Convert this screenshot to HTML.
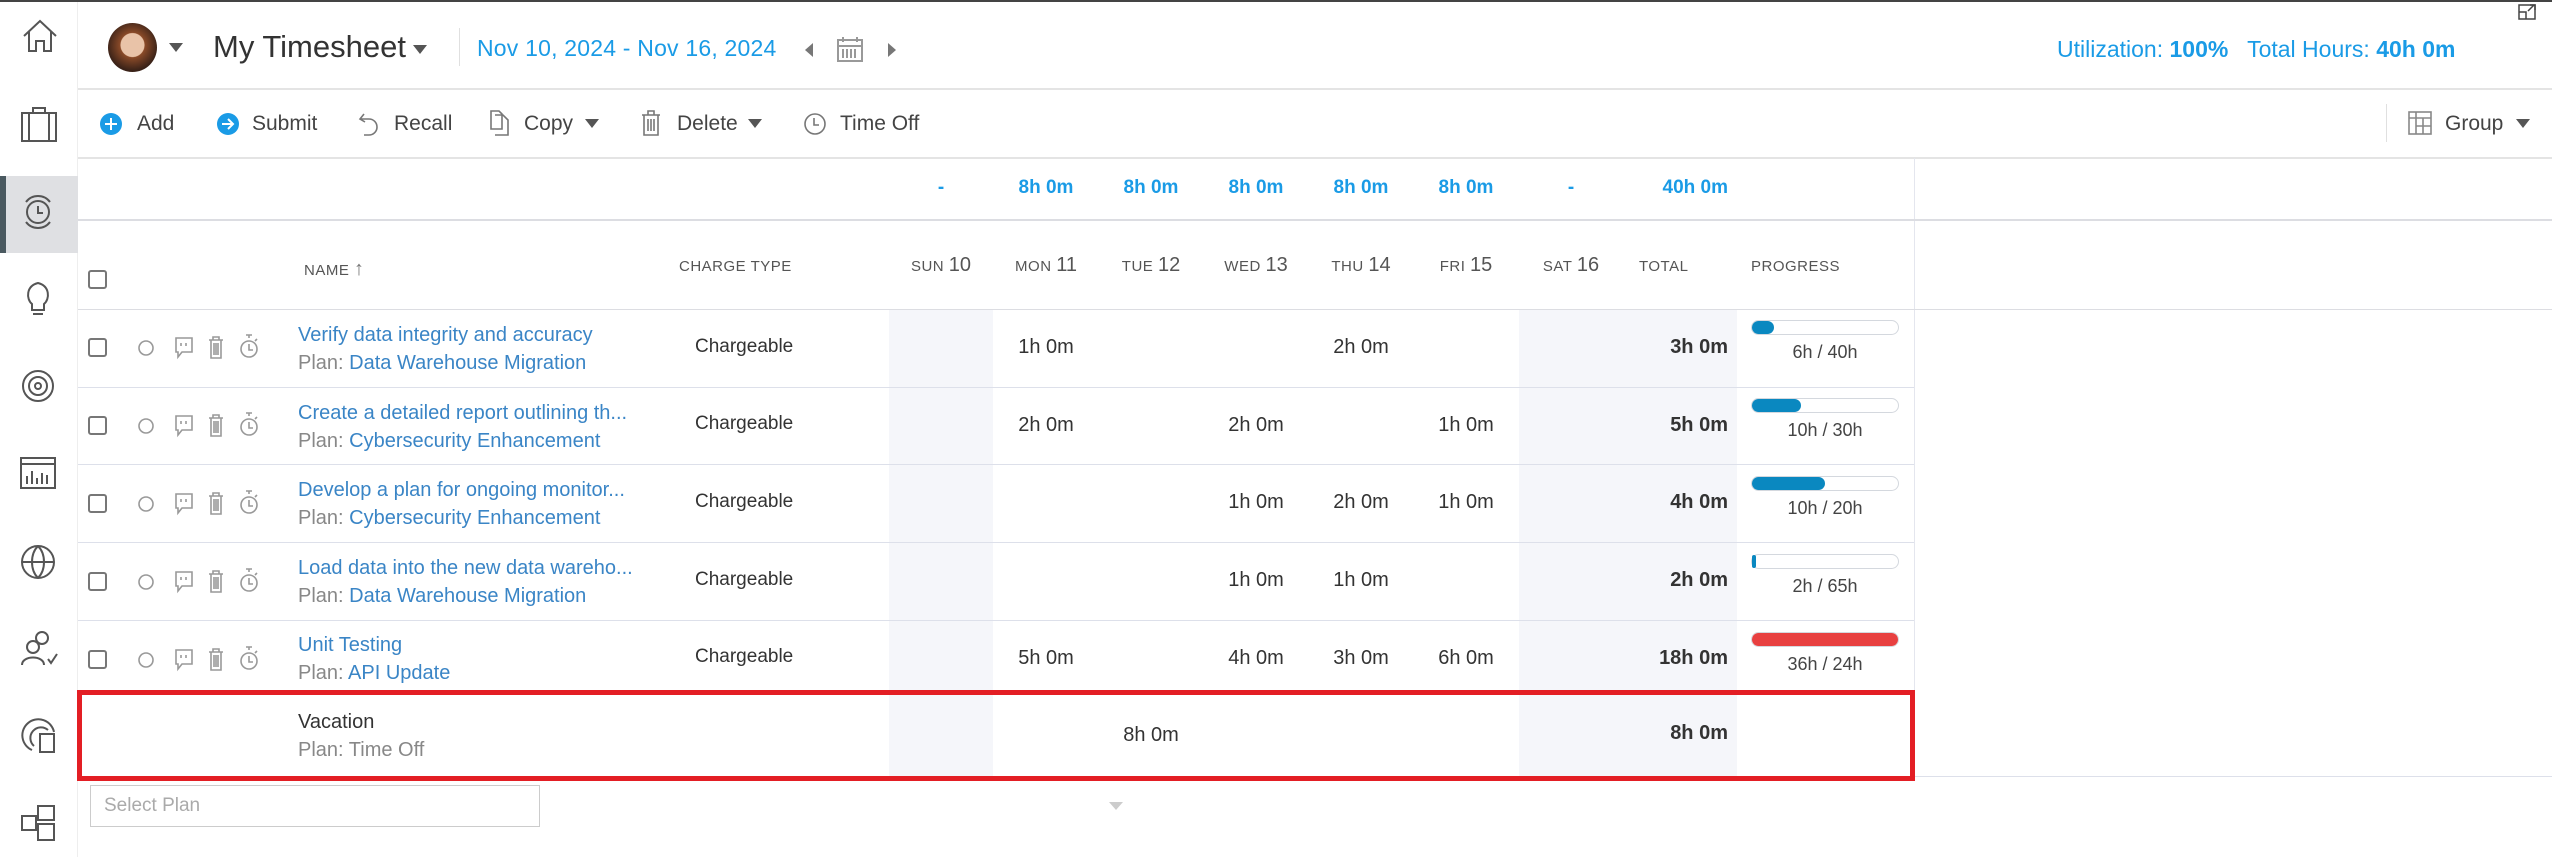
<!DOCTYPE html>
<html><head><meta charset="utf-8"><style>
*{margin:0;padding:0;box-sizing:border-box}
body{width:2552px;height:857px;position:relative;overflow:hidden;background:#fff;font-family:"Liberation Sans",sans-serif;color:#333}
.a{position:absolute;white-space:nowrap}
.c{transform:translateX(-50%)}
.r{transform:translateX(-100%)}
.blue{color:#1a9be6}
.lnk{color:#3a85c6}
.g{color:#888}
.hl{position:absolute;left:78px;height:2px;background:#e4e4e4}
svg{position:absolute;overflow:visible}
.dh{font-size:15px;color:#555;letter-spacing:.5px}
.dh b{font-weight:normal;font-size:20px;letter-spacing:0}
.cell{font-size:20px;color:#333}
.tot{font-size:20px;font-weight:bold;color:#333}
.cb{position:absolute;width:19px;height:19px;border:2px solid #777;border-radius:3px}
.bar{position:absolute;left:1751px;width:148px;height:15px;border:1.5px solid #d4d8de;border-radius:8px;background:#fff}
.bar i{position:absolute;left:0;top:0;bottom:0;border-radius:8px;background:#0a88c0}
.pl{font-size:18px;color:#444}
</style></head><body>
<div class="a" style="left:0;top:0;width:2552px;height:2px;background:#444"></div>
<!-- sidebar -->
<div class="a" style="left:0;top:2px;width:78px;height:855px;border-right:1px solid #eee"></div>
<div class="a" style="left:0;top:176px;width:78px;height:77px;background:#dfe0e3;border-left:6px solid #4a5960"></div>
<svg width="40" height="40" style="left:20px;top:16px" fill="none" stroke="#555" stroke-width="2"><path d="M4 20 L20 5 L36 20 M9 16 V35 H16 V25 H24 V35 H31 V16"/></svg>
<svg width="40" height="40" style="left:20px;top:105px" fill="none" stroke="#555" stroke-width="2"><rect x="2" y="8" width="34" height="28"/><path d="M13 8V3H25V8M9 8V36M29 8V36"/></svg>
<svg width="40" height="40" style="left:20px;top:192px" fill="none" stroke="#555" stroke-width="2"><circle cx="18" cy="20" r="11"/><path d="M18 14V21H23M6 10A15 15 0 0 1 30 10M6 30A15 15 0 0 0 30 30"/></svg>
<svg width="40" height="40" style="left:20px;top:278px" fill="none" stroke="#555" stroke-width="2"><path d="M12 26C6 21 6 8 18 5C30 8 30 21 24 26V32H12Z M13 36H23"/></svg>
<svg width="40" height="40" style="left:20px;top:366px" fill="none" stroke="#555" stroke-width="2"><circle cx="18" cy="20" r="15"/><circle cx="18" cy="20" r="9"/><circle cx="18" cy="20" r="3"/></svg>
<svg width="40" height="40" style="left:20px;top:454px" fill="none" stroke="#555" stroke-width="2"><rect x="1" y="4" width="34" height="30"/><path d="M1 10H35M7 30V22M12 30V17M17 30V24M22 30V19M27 30V21"/></svg>
<svg width="40" height="40" style="left:20px;top:542px" fill="none" stroke="#555" stroke-width="2"><circle cx="18" cy="20" r="16"/><path d="M2 20H34M18 4C10 12 10 28 18 36M18 4C26 12 26 28 18 36"/></svg>
<svg width="40" height="40" style="left:20px;top:629px" fill="none" stroke="#555" stroke-width="2"><circle cx="22" cy="9" r="6"/><circle cx="13" cy="18" r="6"/><path d="M2 36C2 26 24 26 24 36M28 30L31 34L37 25"/></svg>
<svg width="40" height="40" style="left:20px;top:716px" fill="none" stroke="#555" stroke-width="2"><path d="M12 34A16 16 0 1 1 34 16"/><path d="M14 30A10 10 0 1 1 28 14"/><rect x="20" y="18" width="14" height="18"/></svg>
<svg width="40" height="40" style="left:20px;top:804px" fill="none" stroke="#555" stroke-width="2"><rect x="2" y="12" width="14" height="14"/><rect x="18" y="2" width="16" height="14"/><rect x="18" y="20" width="16" height="16"/></svg>
<!-- header -->
<div class="a" style="left:108px;top:23px;width:49px;height:49px;border-radius:50%;background:radial-gradient(circle at 50% 45%,#e9c3a8 0 32%,#8a4a28 34%,#3a2218 70%)"></div>
<svg width="14" height="10" style="left:169px;top:43px"><path d="M0 0H14L7 9Z" fill="#555"/></svg>
<div class="a" style="left:213px;top:29px;font-size:31px;color:#333">My Timesheet</div>
<svg width="14" height="10" style="left:413px;top:45px"><path d="M0 0H14L7 9Z" fill="#555"/></svg>
<div class="a" style="left:459px;top:28px;width:1px;height:38px;background:#e0e0e0"></div>
<div class="a blue" style="left:477px;top:35px;font-size:23px;letter-spacing:.2px">Nov 10, 2024 - Nov 16, 2024</div>
<svg width="8" height="14" style="left:805px;top:43px"><path d="M8 0V14L0 7Z" fill="#777"/></svg>
<svg width="26" height="26" style="left:837px;top:36px" fill="none" stroke="#999" stroke-width="2"><rect x="1" y="4" width="24" height="21"/><path d="M1 10H25M6 1V6M20 1V6M6 13V22M10 13V22M14 13V22M18 13V22"/></svg>
<svg width="8" height="14" style="left:888px;top:43px"><path d="M0 0V14L8 7Z" fill="#777"/></svg>
<div class="a blue" style="left:2057px;top:36px;font-size:23px">Utilization: <b>100%</b>&nbsp;&nbsp; Total Hours: <b>40h 0m</b></div>
<svg width="18" height="16" style="left:2518px;top:4px" fill="none" stroke="#444" stroke-width="1.5"><rect x="1" y="1" width="16" height="14"/><path d="M1 8H8V15M10 7L16 1M12 1H17V6"/></svg>
<div class="hl" style="top:88px;width:2474px"></div>
<!-- toolbar -->
<svg width="22" height="22" style="left:100px;top:113px"><circle cx="11" cy="11" r="11" fill="#1a9be6"/><path d="M11 5V17M5 11H17" stroke="#fff" stroke-width="2"/></svg>
<div class="a" style="left:137px;top:112px;font-size:21px;color:#444">Add</div>
<svg width="22" height="22" style="left:217px;top:113px"><circle cx="11" cy="11" r="11" fill="#1a9be6"/><path d="M5 11H16M11 6L16 11L11 16" stroke="#fff" stroke-width="2" fill="none"/></svg>
<div class="a" style="left:252px;top:112px;font-size:21px;color:#444">Submit</div>
<svg width="20" height="24" style="left:359px;top:112px" fill="none" stroke="#777" stroke-width="1.6"><path d="M5 2L1 7L6 10M1 7H10A8 8 0 0 1 10 23H5"/></svg>
<div class="a" style="left:394px;top:112px;font-size:21px;color:#444">Recall</div>
<svg width="20" height="26" style="left:490px;top:110px" fill="none" stroke="#777" stroke-width="1.6"><path d="M1 1H9L12 4V19H1Z M5 5H13L18 10V25H5"/></svg>
<div class="a" style="left:524px;top:112px;font-size:21px;color:#444">Copy</div>
<svg width="14" height="10" style="left:585px;top:119px"><path d="M0 0H14L7 9Z" fill="#555"/></svg>
<svg width="20" height="26" style="left:641px;top:110px" fill="none" stroke="#777" stroke-width="1.6"><path d="M1 5H19M7 5V1H13V5M3 5V25H17V5M7 9V21M10 9V21M13 9V21"/></svg>
<div class="a" style="left:677px;top:112px;font-size:21px;color:#444">Delete</div>
<svg width="14" height="10" style="left:748px;top:119px"><path d="M0 0H14L7 9Z" fill="#555"/></svg>
<svg width="22" height="22" style="left:804px;top:113px" fill="none" stroke="#777" stroke-width="1.6"><circle cx="11" cy="11" r="10"/><path d="M10 5V12H15"/></svg>
<div class="a" style="left:840px;top:112px;font-size:21px;color:#444">Time Off</div>
<div class="a" style="left:2386px;top:104px;width:1px;height:38px;background:#e0e0e0"></div>
<svg width="24" height="24" style="left:2408px;top:111px" fill="none" stroke="#888" stroke-width="1.6"><rect x="1" y="1" width="22" height="22"/><path d="M1 7H23M8 1V23M8 15H23M15 7V23"/></svg>
<div class="a" style="left:2445px;top:112px;font-size:21px;color:#444">Group</div>
<svg width="14" height="10" style="left:2516px;top:119px"><path d="M0 0H14L7 9Z" fill="#555"/></svg>
<div class="hl" style="top:157px;width:2474px"></div>
<!-- totals row -->
<div class="a" style="left:1914px;top:158px;width:1px;height:620px;background:#e4e6ee"></div>
<div class="a blue c" style="left:941px;top:177px;font-size:19px;font-weight:bold">-</div>
<div class="a blue c" style="left:1046px;top:177px;font-size:19px;font-weight:bold">8h 0m</div>
<div class="a blue c" style="left:1151px;top:177px;font-size:19px;font-weight:bold">8h 0m</div>
<div class="a blue c" style="left:1256px;top:177px;font-size:19px;font-weight:bold">8h 0m</div>
<div class="a blue c" style="left:1361px;top:177px;font-size:19px;font-weight:bold">8h 0m</div>
<div class="a blue c" style="left:1466px;top:177px;font-size:19px;font-weight:bold">8h 0m</div>
<div class="a blue c" style="left:1571px;top:177px;font-size:19px;font-weight:bold">-</div>
<div class="a blue r" style="left:1728px;top:177px;font-size:19px;font-weight:bold">40h 0m</div>
<div class="hl" style="top:219px;width:2474px;background:#dcdde2"></div>
<!-- column header -->
<div class="cb" style="left:88px;top:270px"></div>
<div class="a dh" style="left:304px;top:258px">NAME <span style="font-size:20px;color:#777">&#8593;</span></div>
<div class="a dh" style="left:679px;top:258px">CHARGE TYPE</div>
<div class="a dh c" style="left:941px;top:254px">SUN <b>10</b></div>
<div class="a dh c" style="left:1046px;top:254px">MON <b>11</b></div>
<div class="a dh c" style="left:1151px;top:254px">TUE <b>12</b></div>
<div class="a dh c" style="left:1256px;top:254px">WED <b>13</b></div>
<div class="a dh c" style="left:1361px;top:254px">THU <b>14</b></div>
<div class="a dh c" style="left:1466px;top:254px">FRI <b>15</b></div>
<div class="a dh c" style="left:1571px;top:254px">SAT <b>16</b></div>
<div class="a dh" style="left:1639px;top:258px">TOTAL</div>
<div class="a dh" style="left:1751px;top:258px">PROGRESS</div>
<div class="hl" style="top:309px;width:2474px;background:#dcdde2;height:1px"></div>
<!-- column bgs -->
<div class="a" style="left:889px;top:310px;width:104px;height:466px;background:#f5f6fa"></div>
<div class="a" style="left:1519px;top:310px;width:218px;height:466px;background:#f5f6fa"></div>

<div class="hl" style="top:387px;width:1836px;height:1px;background:#dde0ea"></div>
<div class="hl" style="top:464px;width:1836px;height:1px;background:#dde0ea"></div>
<div class="hl" style="top:542px;width:1836px;height:1px;background:#dde0ea"></div>
<div class="hl" style="top:620px;width:1836px;height:1px;background:#dde0ea"></div>
<div class="hl" style="top:776px;width:2474px;height:1px;background:#dde0ea"></div>

<!-- Row 1 -->
<div class="cb" style="left:88px;top:338px"></div>
<svg width="140" height="30" style="left:136px;top:333px" fill="none" stroke="#999" stroke-width="1.6"><circle cx="10" cy="15" r="7"/><path d="M40 5H56V19H46L42 24V19H40Z M45 10V13M50 10V13"/><path d="M73 7H87M77 7V4H83V7M75 7V25H85V7M78 10V22M80 10V22M82 10V22"/><circle cx="113" cy="16" r="8"/><path d="M113 5V2M110 2H116M113 11V17H117M119 8L121 6"/></svg>
<div class="a lnk" style="left:298px;top:324px;font-size:20px">Verify data integrity and accuracy</div>
<div class="a" style="left:298px;top:352px;font-size:20px"><span class="g">Plan: </span><span class="lnk">Data Warehouse Migration</span></div>
<div class="a" style="left:695px;top:336px;font-size:19px">Chargeable</div>
<div class="a cell c" style="left:1046px;top:336px">1h 0m</div>
<div class="a cell c" style="left:1361px;top:336px">2h 0m</div>
<div class="a tot r" style="left:1728px;top:336px">3h 0m</div>
<div class="bar" style="top:320px"><i style="width:22px"></i></div>
<div class="a pl c" style="left:1825px;top:342px">6h / 40h</div>

<!-- Row 2 -->
<div class="cb" style="left:88px;top:416px"></div>
<svg width="140" height="30" style="left:136px;top:411px" fill="none" stroke="#999" stroke-width="1.6"><circle cx="10" cy="15" r="7"/><path d="M40 5H56V19H46L42 24V19H40Z M45 10V13M50 10V13"/><path d="M73 7H87M77 7V4H83V7M75 7V25H85V7M78 10V22M80 10V22M82 10V22"/><circle cx="113" cy="16" r="8"/><path d="M113 5V2M110 2H116M113 11V17H117M119 8L121 6"/></svg>
<div class="a lnk" style="left:298px;top:402px;font-size:20px">Create a detailed report outlining th...</div>
<div class="a" style="left:298px;top:430px;font-size:20px"><span class="g">Plan: </span><span class="lnk">Cybersecurity Enhancement</span></div>
<div class="a" style="left:695px;top:413px;font-size:19px">Chargeable</div>
<div class="a cell c" style="left:1046px;top:414px">2h 0m</div>
<div class="a cell c" style="left:1256px;top:414px">2h 0m</div>
<div class="a cell c" style="left:1466px;top:414px">1h 0m</div>
<div class="a tot r" style="left:1728px;top:414px">5h 0m</div>
<div class="bar" style="top:398px"><i style="width:49px"></i></div>
<div class="a pl c" style="left:1825px;top:420px">10h / 30h</div>

<!-- Row 3 -->
<div class="cb" style="left:88px;top:494px"></div>
<svg width="140" height="30" style="left:136px;top:489px" fill="none" stroke="#999" stroke-width="1.6"><circle cx="10" cy="15" r="7"/><path d="M40 5H56V19H46L42 24V19H40Z M45 10V13M50 10V13"/><path d="M73 7H87M77 7V4H83V7M75 7V25H85V7M78 10V22M80 10V22M82 10V22"/><circle cx="113" cy="16" r="8"/><path d="M113 5V2M110 2H116M113 11V17H117M119 8L121 6"/></svg>
<div class="a lnk" style="left:298px;top:479px;font-size:20px">Develop a plan for ongoing monitor...</div>
<div class="a" style="left:298px;top:507px;font-size:20px"><span class="g">Plan: </span><span class="lnk">Cybersecurity Enhancement</span></div>
<div class="a" style="left:695px;top:491px;font-size:19px">Chargeable</div>
<div class="a cell c" style="left:1256px;top:491px">1h 0m</div>
<div class="a cell c" style="left:1361px;top:491px">2h 0m</div>
<div class="a cell c" style="left:1466px;top:491px">1h 0m</div>
<div class="a tot r" style="left:1728px;top:491px">4h 0m</div>
<div class="bar" style="top:476px"><i style="width:73px"></i></div>
<div class="a pl c" style="left:1825px;top:498px">10h / 20h</div>

<!-- Row 4 -->
<div class="cb" style="left:88px;top:572px"></div>
<svg width="140" height="30" style="left:136px;top:567px" fill="none" stroke="#999" stroke-width="1.6"><circle cx="10" cy="15" r="7"/><path d="M40 5H56V19H46L42 24V19H40Z M45 10V13M50 10V13"/><path d="M73 7H87M77 7V4H83V7M75 7V25H85V7M78 10V22M80 10V22M82 10V22"/><circle cx="113" cy="16" r="8"/><path d="M113 5V2M110 2H116M113 11V17H117M119 8L121 6"/></svg>
<div class="a lnk" style="left:298px;top:557px;font-size:20px">Load data into the new data wareho...</div>
<div class="a" style="left:298px;top:585px;font-size:20px"><span class="g">Plan: </span><span class="lnk">Data Warehouse Migration</span></div>
<div class="a" style="left:695px;top:569px;font-size:19px">Chargeable</div>
<div class="a cell c" style="left:1256px;top:569px">1h 0m</div>
<div class="a cell c" style="left:1361px;top:569px">1h 0m</div>
<div class="a tot r" style="left:1728px;top:569px">2h 0m</div>
<div class="bar" style="top:554px"><i style="width:4px;border-radius:2px"></i></div>
<div class="a pl c" style="left:1825px;top:576px">2h / 65h</div>

<!-- Row 5 -->
<div class="cb" style="left:88px;top:650px"></div>
<svg width="140" height="30" style="left:136px;top:645px" fill="none" stroke="#999" stroke-width="1.6"><circle cx="10" cy="15" r="7"/><path d="M40 5H56V19H46L42 24V19H40Z M45 10V13M50 10V13"/><path d="M73 7H87M77 7V4H83V7M75 7V25H85V7M78 10V22M80 10V22M82 10V22"/><circle cx="113" cy="16" r="8"/><path d="M113 5V2M110 2H116M113 11V17H117M119 8L121 6"/></svg>
<div class="a lnk" style="left:298px;top:634px;font-size:20px">Unit Testing</div>
<div class="a" style="left:298px;top:662px;font-size:20px"><span class="g">Plan: </span><span class="lnk">API Update</span></div>
<div class="a" style="left:695px;top:646px;font-size:19px">Chargeable</div>
<div class="a cell c" style="left:1046px;top:647px">5h 0m</div>
<div class="a cell c" style="left:1256px;top:647px">4h 0m</div>
<div class="a cell c" style="left:1361px;top:647px">3h 0m</div>
<div class="a cell c" style="left:1466px;top:647px">6h 0m</div>
<div class="a tot r" style="left:1728px;top:647px">18h 0m</div>
<div class="bar" style="top:632px"><i style="width:100%;background:#e84040"></i></div>
<div class="a pl c" style="left:1825px;top:654px">36h / 24h</div>

<!-- Vacation -->
<div class="a" style="left:298px;top:711px;font-size:20px;color:#333">Vacation</div>
<div class="a g" style="left:298px;top:739px;font-size:20px">Plan: Time Off</div>
<div class="a cell c" style="left:1151px;top:724px">8h 0m</div>
<div class="a tot r" style="left:1728px;top:722px">8h 0m</div>
<div class="a" style="left:77px;top:690px;width:1838px;height:91px;border:5px solid #e31e24"></div>

<!-- select plan -->
<div class="a" style="left:90px;top:785px;width:450px;height:42px;border:1px solid #ccc;background:#fff"></div>
<div class="a" style="left:104px;top:795px;font-size:19px;color:#aaa">Select Plan</div>
<svg width="14" height="9" style="left:1109px;top:802px"><path d="M0 0H14L7 8Z" fill="#ccc"/></svg>
</body></html>
